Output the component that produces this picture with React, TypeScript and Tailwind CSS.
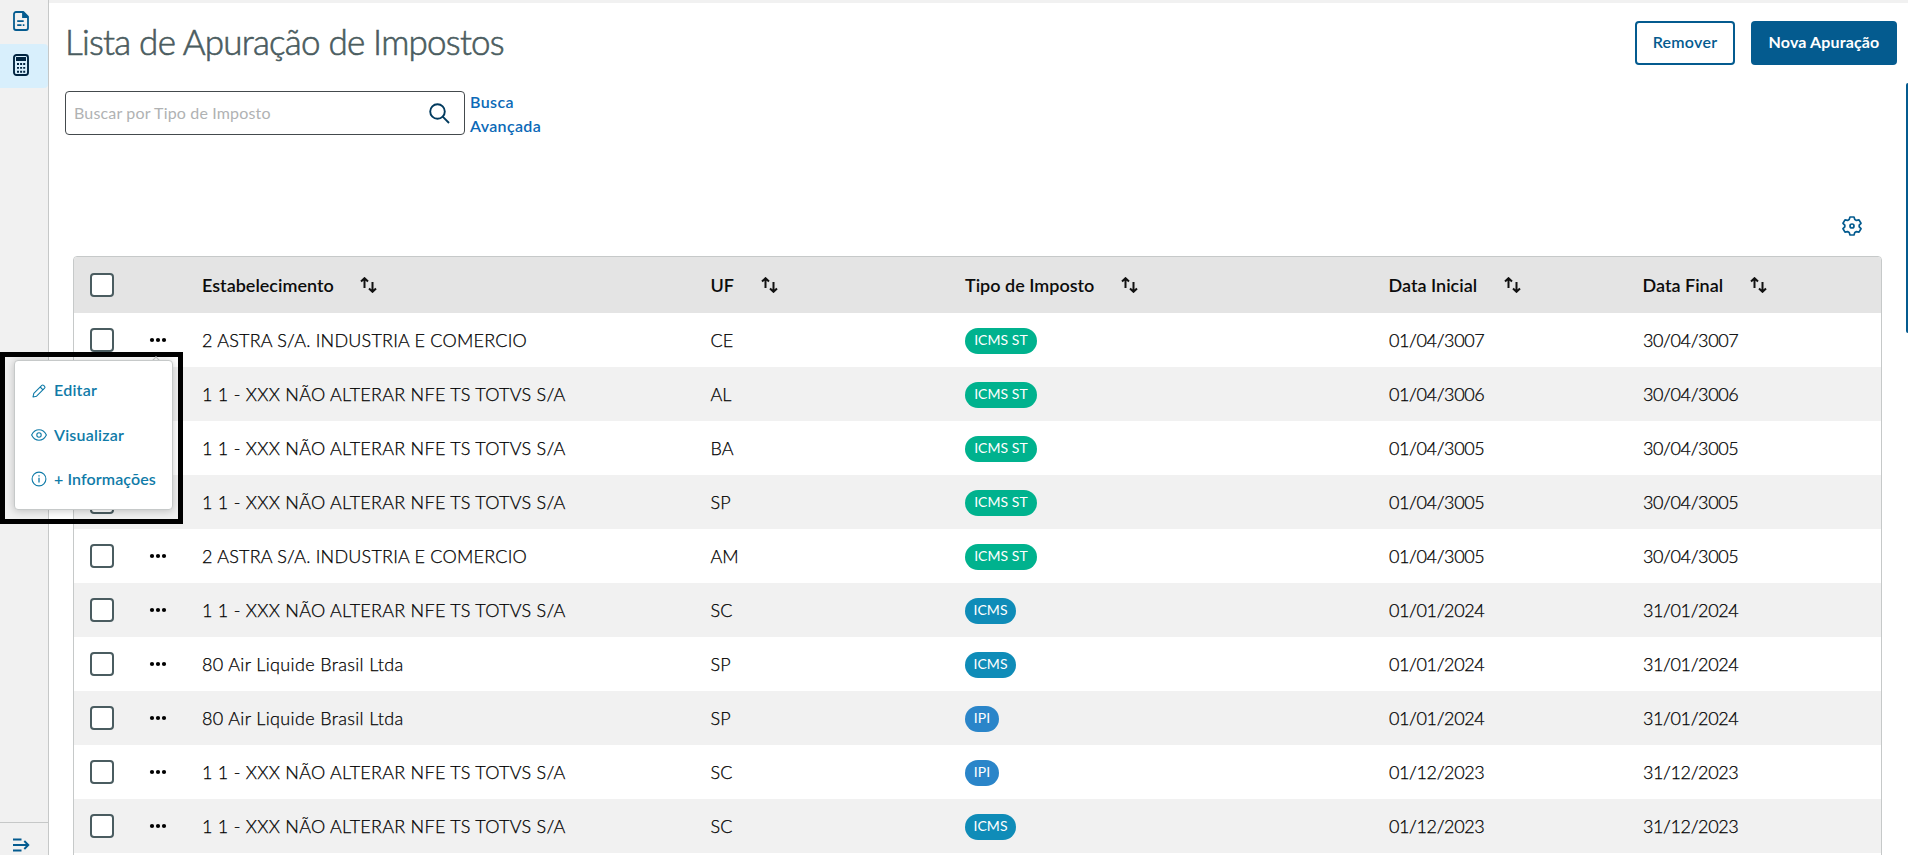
import type { ReactNode } from "react";

type Tax = "ICMS ST" | "ICMS" | "IPI";

interface Company {
  name: string;
  tracking: string;
}

interface Row {
  company: Company;
  uf: string;
  tax: Tax;
  start: string;
  end: string;
}

const ASTRA: Company = { name: "2 ASTRA S/A. INDUSTRIA E COMERCIO", tracking: "tracking-[0.21px]" };
const TOTVS: Company = { name: "1 1 - XXX NÃO ALTERAR NFE TS TOTVS S/A", tracking: "tracking-[0.26px]" };
const AIR: Company = { name: "80 Air Liquide Brasil Ltda", tracking: "tracking-[0.35px]" };

const rows: Row[] = [
  { company: ASTRA, uf: "CE", tax: "ICMS ST", start: "01/04/3007", end: "30/04/3007" },
  { company: TOTVS, uf: "AL", tax: "ICMS ST", start: "01/04/3006", end: "30/04/3006" },
  { company: TOTVS, uf: "BA", tax: "ICMS ST", start: "01/04/3005", end: "30/04/3005" },
  { company: TOTVS, uf: "SP", tax: "ICMS ST", start: "01/04/3005", end: "30/04/3005" },
  { company: ASTRA, uf: "AM", tax: "ICMS ST", start: "01/04/3005", end: "30/04/3005" },
  { company: TOTVS, uf: "SC", tax: "ICMS", start: "01/01/2024", end: "31/01/2024" },
  { company: AIR, uf: "SP", tax: "ICMS", start: "01/01/2024", end: "31/01/2024" },
  { company: AIR, uf: "SP", tax: "IPI", start: "01/01/2024", end: "31/01/2024" },
  { company: TOTVS, uf: "SC", tax: "IPI", start: "01/12/2023", end: "31/12/2023" },
  { company: TOTVS, uf: "SC", tax: "ICMS", start: "01/12/2023", end: "31/12/2023" },
];

const badgeStyle: Record<Tax, string> = {
  "ICMS ST": "w-[72px] bg-[#00b28e]",
  ICMS: "w-[51px] bg-[#0f8cb8]",
  IPI: "w-[34px] bg-[#2a85c9]",
};

const GRID = "grid grid-cols-[128px_508.5px_254.5px_423.5px_254px_1fr] items-center";

function Checkbox() {
  return <span className="block h-6 w-6 rounded border-2 border-[#4a5c60] bg-white" />;
}

function SortIcon() {
  return (
    <svg width="17" height="16" viewBox="0 0 17 16" fill="none" stroke="#111" strokeWidth="2">
      <path d="M4.5 11V1.5M1 4.5 4.5 1.2 8 4.5M12.5 5v9.5M9 11.5l3.5 3.3 3.5-3.3" />
    </svg>
  );
}

function Dots() {
  return (
    <svg width="18" height="6" viewBox="0 0 18 6" fill="#000">
      <circle cx="3" cy="3" r="2.1" />
      <circle cx="9" cy="3" r="2.1" />
      <circle cx="15" cy="3" r="2.1" />
    </svg>
  );
}

function HeaderCell({ children }: { children: ReactNode }) {
  return (
    <div className="flex items-center gap-[26.5px] font-semibold text-[#0c0c0c]">
      <span className="pb-px">{children}</span>
      <SortIcon />
    </div>
  );
}

function Sidebar() {
  return (
    <aside className="flex w-[49px] shrink-0 flex-col justify-between border-r border-[#c6c8c8] bg-[#f1f1f1]">
      <nav>
        <div className="flex h-11 items-center pl-[13px]">
          <svg width="16" height="20" viewBox="0 0 16 20" className="mt-[-2px]" fill="none" stroke="#045b8f" strokeWidth="1.8">
            <path d="M10.3 1H3a2 2 0 0 0-2 2v14a2 2 0 0 0 2 2h10a2 2 0 0 0 2-2V5.700z" strokeLinejoin="round" />
            <path d="M10 1v5h5M4.200 10.200h6.500M4.200 14.200h4.300M9.800 14.200h1.600" />
            <path d="M10 1v5h5z" fill="#045b8f" stroke="none" />
          </svg>
        </div>
        <div className="flex h-11 items-center rounded-r bg-[#d8effc] pl-[13px]">
          <svg width="16" height="22" viewBox="0 0 16 22" className="mt-[-2px]" fill="none" stroke="#012440">
            <rect x="1" y="1" width="14" height="20" rx="2.500" strokeWidth="1.900" />
            <path d="M3 5h10" strokeWidth="4" />
            <path d="M4 10h8.200M4 13.900h8.200M4 17.700h8.200" strokeWidth="1.900" strokeDasharray="2 1.100" />
          </svg>
        </div>
      </nav>
      <div className="flex h-[33px] items-end border-t border-[#c6c8c8] pb-[3px] pl-[13px]">
        <svg width="17" height="14" viewBox="0 0 17 14" fill="none" stroke="#045b8f" strokeWidth="1.9">
          <path d="M0 1.500h8.500M0 7h15M0 12.500h8.500M11.300 3l4 4-4 4" />
        </svg>
      </div>
    </aside>
  );
}

function ActionsMenu() {
  return (
    <div className="absolute left-0 top-[352px] h-[172px] w-[183px] border-[5px] border-black">
      <div className="absolute left-[147px] top-[1px] h-2 w-2 rotate-45 border border-[#c6c8c8] bg-white" />
      <div className="absolute left-[9px] top-[3px] flex h-[150px] w-[159px] flex-col rounded border border-[#c6c9c9] bg-white pl-[15.5px] pt-2 text-base font-semibold text-[#107ba8] shadow-[0_1px_8px_rgba(0,0,0,0.22)]">
        <div className="flex h-11 items-center gap-[7.5px]">
          <svg width="16" height="16" viewBox="0 0 16 16" fill="none" stroke="currentColor" strokeWidth="1.1" strokeLinejoin="round">
            <path d="M2 14l.8-3.600 8-8a1.300 1.300 0 0 1 1.800 0l1 1a1.300 1.300 0 0 1 0 1.800l-8 8zM9.200 4l2.800 2.800" />
          </svg>
          <span className="pb-[2px] tracking-[0.24px]">Editar</span>
        </div>
        <div className="flex h-11 items-center gap-[7.5px]">
          <svg width="16" height="16" viewBox="0 0 16 16" fill="none" stroke="currentColor" strokeWidth="1.1">
            <path d="M.6 8C2.300 4.700 5 2.800 8 2.800S13.700 4.700 15.400 8C13.700 11.300 11 13.200 8 13.200S2.300 11.300.6 8z" />
            <circle cx="8" cy="8" r="2.200" />
          </svg>
          <span className="pb-px tracking-[0.2px]">Visualizar</span>
        </div>
        <div className="flex h-11 items-center gap-[7.5px]">
          <svg width="16" height="16" viewBox="0 0 16 16" fill="none" stroke="currentColor" strokeWidth="1.1">
            <circle cx="8" cy="8" r="6.900" />
            <path d="M8 6.800v4.700M8 4.300v1.300" strokeWidth="1.300" />
          </svg>
          <span className="pb-px tracking-[0.1px]">+ Informações</span>
        </div>
      </div>
    </div>
  );
}

export default function App() {
  return (
    <div className="relative flex h-[855px] w-full overflow-hidden bg-white font-['Lato','Liberation_Sans',sans-serif]">
      <Sidebar />
      <main className="flex min-w-0 flex-1 flex-col border-t-[3px] border-[#f1f1f1]">
        <header className="flex h-[62px] shrink-0 items-end justify-between pl-4 pr-[11px]">
          <h1 className="h-11 text-[35px] font-light leading-[40px] tracking-[-0.78px] text-[#4a5c60] [-webkit-text-stroke:0.6px_#4a5c60]">
            Lista de Apuração de Impostos
          </h1>
          <div className="flex gap-4 text-base font-bold">
            <button className="h-11 w-[100px] rounded border-2 border-[#045b8f] pb-[2px] font-semibold tracking-[0.25px] text-[#045b8f]">Remover</button>
            <button className="h-11 w-[146px] rounded bg-[#045b8f] pb-[2px] tracking-[0.14px] text-white">Nova Apuração</button>
          </div>
        </header>

        <div className="mt-[26px] flex h-12 shrink-0 items-start pl-4">
          <div className="flex h-11 w-[400px] items-center justify-between rounded border border-[#444a4d] pl-2 pr-[14px]">
            <span className="pb-px text-base tracking-[0.16px] text-[#b0b2b3]">Buscar por Tipo de Imposto</span>
            <svg width="21" height="21" viewBox="0 0 21 21" fill="none" stroke="#013a5e" strokeWidth="1.9">
              <circle cx="8.500" cy="8.500" r="7.300" />
              <path d="M13.700 13.700 20 20" />
            </svg>
          </div>
          <div className="-mt-px flex flex-col pl-[5px] text-base font-semibold leading-6 text-[#0b69b7]">
            <span className="tracking-[0.4px]">Busca</span>
            <span className="tracking-[0.35px]">Avançada</span>
          </div>
        </div>

        <div className="mt-[73px] flex h-7 shrink-0 items-center justify-end pr-[46px]">
          <svg width="20" height="20" viewBox="0 0 20 20" fill="none" stroke="#045b8f" strokeWidth="1.7" strokeLinejoin="round">
            <path d="M8 1h4l.8 2.500 1.600.9 2.600-.5 2 3.400L17.200 9.200v1.600L19 12.700l-2 3.400-2.600-.5-1.600.9L12 19H8l-.8-2.500-1.600-.9-2.600.5-2-3.400 1.800-1.900V9.200L1 7.300l2-3.400 2.600.5 1.600-.9z" />
            <circle cx="10" cy="10" r="2" />
          </svg>
        </div>

        <section className="ml-6 mr-[26px] mt-4 h-[620px] shrink-0 rounded-t border border-[#c6c9c9] text-lg">
          <div className={`${GRID} h-14 rounded-t-[3px] bg-[#e4e4e4]`}>
            <div className="pl-4"><Checkbox /></div>
            <HeaderCell>Estabelecimento</HeaderCell>
            <HeaderCell>UF</HeaderCell>
            <HeaderCell>Tipo de Imposto</HeaderCell>
            <HeaderCell>Data Inicial</HeaderCell>
            <HeaderCell>Data Final</HeaderCell>
          </div>
          {rows.map((row, i) => (
            <div key={i} className={`${GRID} h-[54px] font-light text-black [-webkit-text-stroke:0.25px_#000] ${i % 2 ? "bg-[#f1f1f1]" : "bg-white"}`}>
              <div className="flex items-center gap-[35px] pl-4"><Checkbox /><Dots /></div>
              <span className={row.company.tracking}>{row.company.name}</span>
              <span>{row.uf}</span>
              <span className={`${badgeStyle[row.tax]} flex h-[26px] translate-y-px items-center justify-center rounded-[13px] pb-[2px] text-sm font-normal tracking-[0.06px] text-white [-webkit-text-stroke:0]`}>
                {row.tax}
              </span>
              <span className="pl-[0.5px] tracking-[-0.38px]">{row.start}</span>
              <span className="pl-[0.5px] tracking-[-0.38px]">{row.end}</span>
            </div>
          ))}
        </section>
      </main>
      <div className="absolute right-0 top-[83px] h-[250px] w-[2px] rounded-l-sm bg-[#045b8f]" />
      <ActionsMenu />
    </div>
  );
}
